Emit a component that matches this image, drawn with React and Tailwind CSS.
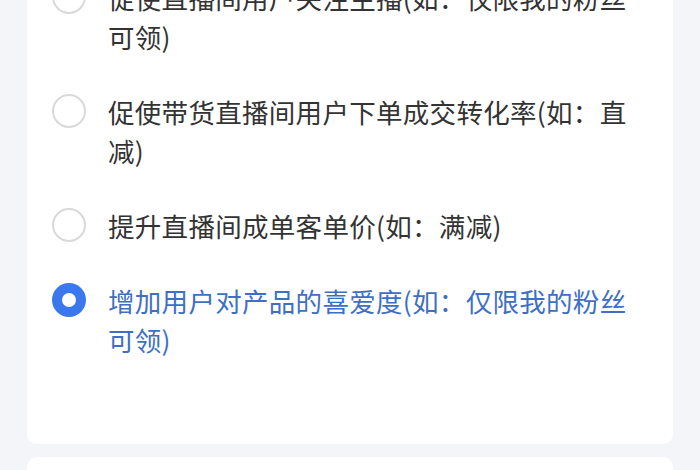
import React from 'react';

const options = [
  { id: 1, label: '促使直播间用户关注主播(如：仅限我的粉丝可领)' },
  { id: 2, label: '促使带货直播间用户下单成交转化率(如：直减)' },
  { id: 3, label: '提升直播间成单客单价(如：满减)' },
  { id: 4, label: '增加用户对产品的喜爱度(如：仅限我的粉丝可领)' },
];

function Radio({ checked }) {
  if (checked) {
    return (
      <div className="w-[34px] h-[34px] rounded-full bg-[#3b78ee] flex items-center justify-center shrink-0 mt-[2px]">
        <div className="w-[14px] h-[14px] rounded-full bg-white"></div>
      </div>
    );
  }
  return <div className="w-[34px] h-[34px] rounded-full border-2 border-[#d9d9d9] bg-white shrink-0 mt-[2px]"></div>;
}

export default function App() {
  const selected = 4;

  return (
    <div
      className="h-[470px] w-[700px] overflow-hidden bg-[#f4f5f9]"
      style={{ fontFamily: '"Noto Sans CJK SC", "Noto Sans", sans-serif' }}
    >
      <div className="mx-[27px] -mt-[22px] bg-white rounded-b-[10px] pl-[25px] pb-[85px]">
        <div className="flex flex-col gap-[36px]">
          {options.map(opt => (
            <div key={opt.id} className="flex items-start gap-[22px]">
              <Radio checked={opt.id === selected} />
              <p
                className={
                  'w-[538px] text-[26.5px] leading-[39px] tracking-[0.3px] ' +
                  (opt.id === selected ? 'text-[#3e6fc4]' : 'text-[#333333]')
                }
              >
                {opt.label}
              </p>
            </div>
          ))}
        </div>
      </div>
      <div className="mx-[27px] mt-[13px] h-[40px] bg-white rounded-t-[10px]"></div>
    </div>
  );
}
